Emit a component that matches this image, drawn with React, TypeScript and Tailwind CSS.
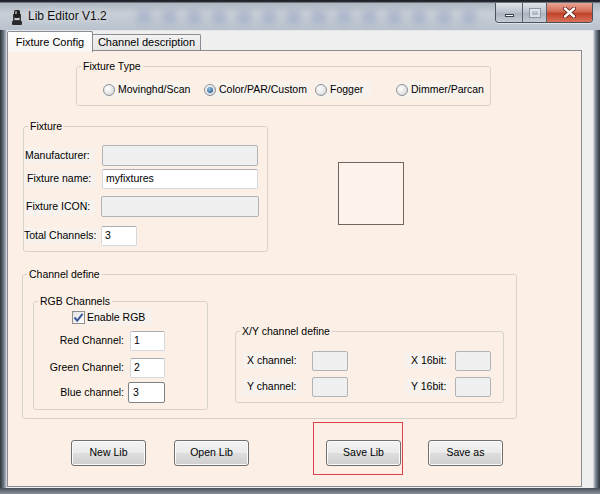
import type { ReactNode } from "react";

const Group = ({
  title,
  className,
  children,
}: {
  title: string;
  className: string;
  children: ReactNode;
}) => (
  <fieldset className={`border border-[#d6d3cf] rounded-[3px] ${className}`}>
    <legend className="ml-[4px] px-[2px] leading-[12px]">{title}</legend>
    {children}
  </fieldset>
);

const Radio = ({
  label,
  checked,
  className,
}: {
  label: string;
  checked?: boolean;
  className: string;
}) => (
  <div className={`flex items-center h-[16px] bg-[#f8f2ed] shrink-0 ${className}`}>
    <span className="w-[12px] h-[12px] shrink-0 rounded-full border border-[#8e9195] bg-[radial-gradient(circle_at_35%_35%,#ffffff,#cfd1d4)] flex items-center justify-center">
      {checked && (
        <span className="w-[6px] h-[6px] rounded-full bg-[radial-gradient(circle_at_40%_35%,#8cc0e6,#1b4c7c)]" />
      )}
    </span>
    <span className="ml-[3px] whitespace-nowrap">{label}</span>
  </div>
);

const TextBox = ({
  value,
  disabled,
  className,
}: {
  value?: string;
  disabled?: boolean;
  className: string;
}) => (
  <div
    className={`shrink-0 rounded-[2px] border flex items-center pl-[3px] ${
      disabled ? "bg-[#f0f0f0] border-[#b0b4b8]" : "bg-white border-[#d5d9de] border-t-[#abadb3]"
    } ${className}`}
  >
    {value}
  </div>
);

const Btn = ({ label, className }: { label: string; className: string }) => (
  <div
    className={`w-[75px] h-[26px] shrink-0 rounded-[3px] border border-[#707070] bg-[linear-gradient(to_bottom,#f3f3f3_0%,#ebebeb_48%,#dddddd_52%,#cfcfcf_100%)] shadow-[inset_0_0_0_1px_#fbfbfb] flex items-center justify-center ${className}`}
  >
    {label}
  </div>
);

const Label = ({ text, className }: { text: string; className: string }) => (
  <span className={`shrink-0 h-[16px] flex items-center bg-[#f7f2ed] ${className}`}>{text}</span>
);

const FixtureIcon = () => (
  <svg width="12" height="16" viewBox="0 0 12 16" className="shrink-0">
    <rect x="1" y="12" width="10" height="4" rx="1" fill="#2a2a2a" />
    <path d="M2 12 V5 H3.5 V11 H8.5 V5 H10 V12 Z" fill="#3a3a3a" />
    <rect x="3" y="1" width="6" height="8" rx="1.5" fill="#1f1f1f" />
    <rect x="4" y="2" width="2" height="3" fill="#8a8a8a" />
  </svg>
);

export default function App() {
  return (
    <div className="w-[600px] h-[494px] flex flex-col overflow-hidden font-['Liberation_Sans',Arial,sans-serif] text-[10.5px] text-black bg-[#7d8591]">
      {/* title bar */}
      <div className="h-[30px] shrink-0 flex items-start bg-[linear-gradient(to_bottom,#1c1f24_0px,#2a2e35_2px,#aeb7c2_3px,#c8ced6_45%,#b9c2cd_100%)]">
        <div className="ml-[11px] mt-[9px]">
          <FixtureIcon />
        </div>
        <span className="ml-[5px] mt-[9px] leading-[14px] text-[12px] text-[#111] [text-shadow:0_0_6px_rgba(255,255,255,0.95)] shrink-0">
          Lib Editor V1.2
        </span>
        <div className="ml-[30px] mt-[10px] flex gap-[11px] shrink-0">
          {Array.from({ length: 14 }).map((_, i) => (
            <div key={i} className="w-[14px] h-[14px] bg-[#95a4c4] opacity-50 blur-[3px]" />
          ))}
        </div>
        <div className="ml-auto mr-[7px] mt-[3px] flex shrink-0 rounded-b-[4px] border border-t-0 border-[#4b525c] overflow-hidden shadow-[0_1px_0_rgba(255,255,255,0.5)]">
          <div className="w-[27px] h-[19px] bg-[linear-gradient(to_bottom,#dfe4ea,#b9c1cb_50%,#a9b2bd_51%,#c5ccd5)] flex items-center justify-center border-r border-[#5a616b]">
            <span className="mt-[6px] w-[9px] h-[3px] bg-white border border-[#3c424b]" />
          </div>
          <div className="w-[24px] h-[19px] bg-[linear-gradient(to_bottom,#dfe4ea,#b9c1cb_50%,#a9b2bd_51%,#c5ccd5)] flex items-center justify-center border-r border-[#5a616b]">
            <span className="w-[10px] h-[8px] border-2 border-[#eef0f2] outline outline-1 outline-[#7a818b] opacity-70" />
          </div>
          <div className="w-[45px] h-[19px] bg-[linear-gradient(to_bottom,#e9a595,#d26b55_45%,#c2412a_55%,#d9735a)] flex items-center justify-center">
            <svg width="13" height="11" viewBox="0 0 13 11">
              <path
                d="M2 1.5 L11 9.5 M11 1.5 L2 9.5"
                stroke="#5a1a10"
                strokeWidth="4"
                strokeLinecap="round"
              />
              <path
                d="M2 1.5 L11 9.5 M11 1.5 L2 9.5"
                stroke="#ffffff"
                strokeWidth="2.4"
                strokeLinecap="round"
              />
            </svg>
          </div>
        </div>
      </div>

      {/* body */}
      <div className="flex flex-1 min-h-0">
        <div className="w-[7px] shrink-0 bg-[linear-gradient(to_right,#2f343b,#6f7a86_55%,#a9b0b8_80%,#e2e4e6)]" />
        <div className="flex-1 flex flex-col bg-[#efefef] border-t border-[#e4e7ea]">
          {/* tabs */}
          <div className="h-[19px] flex items-start relative z-10 shrink-0">
            <div className="mt-0 w-[86px] h-[21px] bg-[linear-gradient(to_bottom,#ffffff,#f8f5f2)] border border-b-0 border-[#898c95] rounded-t-[2px] flex items-center justify-center text-[11px]">
              Fixture Config
            </div>
            <div className="mt-[3px] w-[108px] h-[16px] bg-[linear-gradient(to_bottom,#f3f3f3,#e5e5e5)] border border-l-0 border-b-0 border-[#898c95] rounded-tr-[2px] flex items-center justify-center text-[11px]">
              Channel description
            </div>
          </div>

          {/* pane */}
          <div className="w-[575px] flex-1 mb-[1px] border border-[#898c95] bg-[#fcf0e6] flex flex-col">
            {/* Fixture Type */}
            <Group title="Fixture Type" className="mt-[9px] ml-[68px] w-[415px] pt-[10px] pb-[7px]">
              <div className="flex">
                <Radio label="Movinghd/Scan" className="ml-[26px] w-[85px]" />
                <Radio label="Color/PAR/Custom" checked className="ml-[16px] w-[106px]" />
                <Radio label="Fogger" className="ml-[5px] w-[57px]" />
                <Radio label="Dimmer/Parcan" className="ml-[24px] w-[86px]" />
              </div>
            </Group>

            {/* Fixture + icon square */}
            <div className="flex items-start mt-[14px]">
              <Group title="Fixture" className="ml-[15px] w-[245px] pt-[13px] pb-[5px]">
                <div className="flex items-center h-[21px]">
                  <div className="w-[78px] shrink-0">
                    <Label text="Manufacturer:" className="pl-[1px] w-[70px]" />
                  </div>
                  <TextBox disabled className="w-[156px] h-[21px]" />
                </div>
                <div className="flex items-center h-[20px] mt-[3px]">
                  <div className="w-[78px] shrink-0">
                    <Label text="Fixture name:" className="pl-[3px] w-[72px]" />
                  </div>
                  <TextBox value="myfixtures" className="w-[156px] h-[20px]" />
                </div>
                <div className="flex items-center h-[21px] mt-[7px]">
                  <div className="w-[77px] shrink-0">
                    <Label text="Fixture ICON:" className="pl-[2px] w-[71px]" />
                  </div>
                  <TextBox disabled className="w-[158px] h-[21px]" />
                </div>
                <div className="flex items-center h-[20px] mt-[9px]">
                  <div className="w-[77px] shrink-0">
                    <Label text="Total Channels:" className="w-[74px]" />
                  </div>
                  <TextBox value="3" className="w-[36px] h-[20px]" />
                </div>
              </Group>
              <div className="ml-[70px] mt-[42px] w-[66px] h-[63px] border-[1.5px] border-[#6f6660] bg-[#fdf3ea]" />
            </div>

            {/* Channel define */}
            <Group title="Channel define" className="mt-[16px] ml-[14px] w-[495px] pb-[8px]">
              <div className="flex items-start">
                <Group title="RGB Channels" className="mt-[15px] ml-[10px] w-[175px] pb-[6px]">
                  <div className="flex items-center h-[15px] mt-[3px] ml-[38px]">
                    <span className="w-[13px] h-[13px] shrink-0 border border-[#8f8f8f] bg-[linear-gradient(135deg,#e3e3e3,#ffffff)] flex items-center justify-center">
                      <svg width="11" height="11" viewBox="0 0 11 11">
                        <path d="M1.5 5.5 L4.2 8.6 L9.6 1.8" fill="none" stroke="#3b5898" strokeWidth="2" />
                      </svg>
                    </span>
                    <span className="ml-[1px] pl-[1px] h-[15px] w-[67px] flex items-center bg-[#f7f2ed]">
                      Enable RGB
                    </span>
                  </div>
                  <div className="flex items-center h-[20px] mt-[6px]">
                    <span className="w-[90px] text-right shrink-0">Red Channel:</span>
                    <TextBox value="1" className="ml-[6px] w-[35px] h-[20px]" />
                  </div>
                  <div className="flex items-center h-[20px] mt-[7px]">
                    <span className="w-[90px] text-right shrink-0">Green Channel:</span>
                    <TextBox value="2" className="ml-[6px] w-[35px] h-[20px]" />
                  </div>
                  <div className="flex items-center h-[21px] mt-[4px]">
                    <span className="w-[90px] text-right shrink-0">Blue channel:</span>
                    <div className="ml-[4px] w-[37px] h-[21px] shrink-0 rounded-[2px] border border-[#7d8287] bg-white flex items-center pl-[4px]">
                      3
                    </div>
                  </div>
                </Group>

                <Group title="X/Y channel define" className="mt-[45px] ml-[27px] w-[269px] pt-[14px] pb-[5px]">
                  <div className="flex items-center h-[20px]">
                    <Label text="X channel:" className="ml-[7px] w-[57px] pl-[4px]" />
                    <TextBox disabled className="ml-[12px] w-[36px] h-[20px]" />
                    <Label text="X 16bit:" className="ml-[58px] w-[44px] pl-[5px]" />
                    <TextBox disabled className="ml-[5px] w-[36px] h-[20px]" />
                  </div>
                  <div className="flex items-center h-[20px] mt-[6px]">
                    <Label text="Y channel:" className="ml-[7px] w-[57px] pl-[4px]" />
                    <TextBox disabled className="ml-[12px] w-[36px] h-[20px]" />
                    <Label text="Y 16bit:" className="ml-[58px] w-[44px] pl-[5px]" />
                    <TextBox disabled className="ml-[5px] w-[36px] h-[20px]" />
                  </div>
                </Group>
              </div>
            </Group>

            {/* buttons */}
            <div className="flex items-start mt-[3px]">
              <Btn label="New Lib" className="ml-[63px] mt-[18px]" />
              <Btn label="Open Lib" className="ml-[28px] mt-[18px]" />
              <div className="ml-[64px] w-[90px] h-[53px] shrink-0 border border-[#e0404c]">
                <Btn label="Save Lib" className="ml-[12px] mt-[17px]" />
              </div>
              <Btn label="Save as" className="ml-[25px] mt-[18px]" />
            </div>
          </div>
        </div>
        <div className="w-[7px] shrink-0 bg-[linear-gradient(to_left,#2f343b,#6f7a86_55%,#a9b0b8_80%,#e2e4e6)]" />
      </div>
      <div className="h-[6px] shrink-0 bg-[linear-gradient(to_bottom,#4a4f56,#8a9199)]" />
    </div>
  );
}
